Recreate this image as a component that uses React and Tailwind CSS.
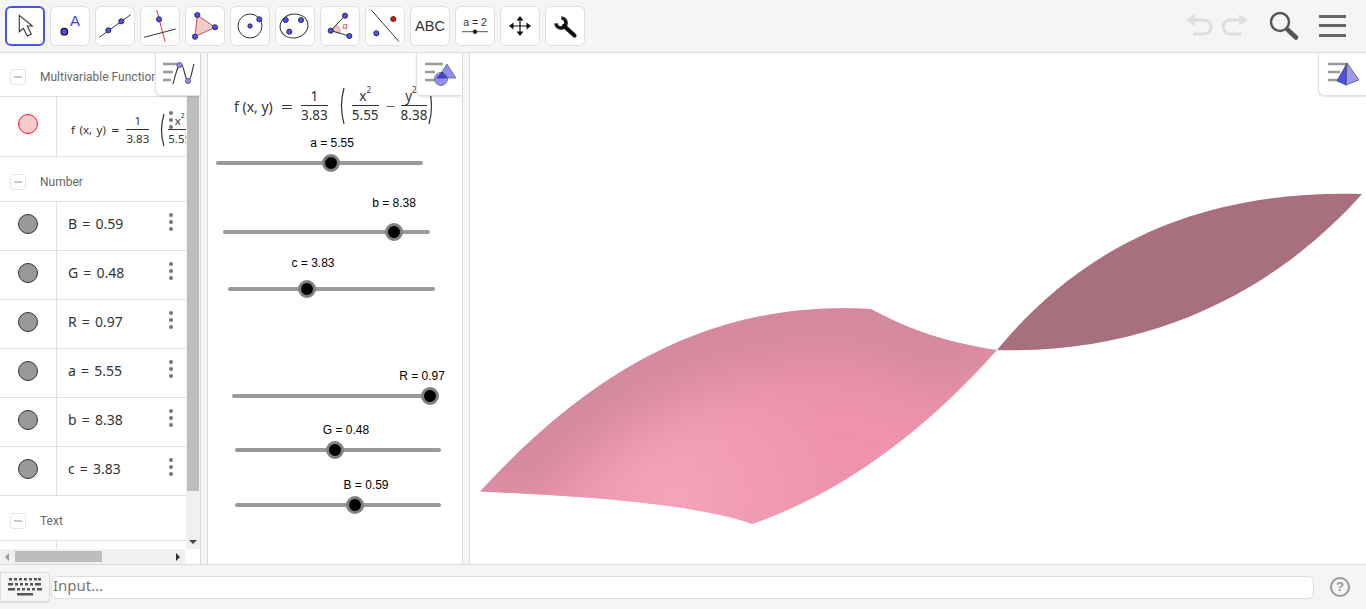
import React from "react";

const BLUE = "#4d4dff";

const Pt = ({ x, y, r = 2.6, fill = BLUE }) => (
  <circle cx={x} cy={y} r={r} fill={fill} stroke="#222" strokeWidth="0.8" />
);

/* -------------------- Toolbar icons -------------------- */

const toolIcons = [
  <path d="M14.3 9.3V25.7L18.3 22.3L22.3 30L26.3 28L22.3 20H27.3Z" fill="#fff" stroke="#333" strokeWidth="1.1" />,
  <>
    <circle cx="14.3" cy="25.7" r="3.3" fill={BLUE} stroke="#111" strokeWidth="1.2" />
    <text x="20" y="20" fontSize="15" fill="#4040f0" fontFamily="Liberation Sans, sans-serif">A</text>
  </>,
  <>
    <line x1="4.3" y1="31.3" x2="35.7" y2="8.7" stroke="#333" />
    <Pt x={13.3} y={24.3} />
    <Pt x={26.3} y={15.3} />
  </>,
  <>
    <line x1="16.7" y1="4" x2="25" y2="35.7" stroke="#e8323c" />
    <line x1="4" y1="31.3" x2="35.7" y2="23" stroke="#333" />
    <Pt x={19} y={13.3} />
  </>,
  <>
    <path d="M12.3 9L30 21.3L10 30.7Z" fill="#f6c8c8" stroke="#a85a5a" />
    <Pt x={12.3} y={9} />
    <Pt x={30} y={21.3} />
    <Pt x={10} y={30.7} />
  </>,
  <>
    <circle cx="20" cy="20" r="12" fill="none" stroke="#333" />
    <Pt x={20} y={20} r={2.2} />
    <Pt x={29.3} y={13.3} />
  </>,
  <>
    <ellipse cx="19" cy="20" rx="14" ry="12" fill="none" stroke="#333" transform="rotate(-12 19 20)" />
    <Pt x={10.7} y={14} />
    <Pt x={14.3} y={25.7} />
    <Pt x={26} y={14} />
  </>,
  <>
    <path d="M10.7 24.7L17 19A9 9 0 0 1 20 26.8Z" fill="#f6c0c0" stroke="#e08080" strokeWidth="0.7" />
    <path d="M25 9.7L10.7 24.7L29.3 30" fill="none" stroke="#333" />
    <Pt x={10.7} y={24.7} />
    <Pt x={25} y={9.7} />
    <Pt x={29.3} y={30} />
    <text x="22.5" y="23" fontSize="9" fill="#e8323c" fontFamily="Liberation Sans, sans-serif">α</text>
  </>,
  <>
    <line x1="6.3" y1="4" x2="34" y2="35.7" stroke="#333" />
    <Pt x={28.3} y={13} fill="#e01010" />
    <Pt x={11.3} y={27.3} />
  </>,
  <text x="20" y="25.2" fontSize="14.5" textAnchor="middle" fill="#333" fontFamily="Liberation Sans, sans-serif">ABC</text>,
  <>
    <text x="20" y="19.5" fontSize="10.5" textAnchor="middle" fill="#333" fontFamily="Liberation Sans, sans-serif">a = 2</text>
    <line x1="7" y1="25.7" x2="33" y2="25.7" stroke="#555" />
    <circle cx="20" cy="25.7" r="2.2" fill="#222" />
  </>,
  <>
    <path d="M20 12V28M12 20H28" stroke="#111" strokeWidth="1.2" />
    <path d="M20 10L23.5 14.5H16.5ZM20 30L23.5 25.5H16.5ZM9 20L13.5 16.5V23.5ZM31 20L26.5 16.5V23.5Z" fill="#111" />
  </>,
  <>
    <path d="M16.4 12A5 5 0 1 1 11 17.4" fill="none" stroke="#111" strokeWidth="3.6" />
    <line x1="19" y1="20" x2="29.5" y2="29.5" stroke="#111" strokeWidth="4.2" strokeLinecap="round" />
  </>,
];

const ToolButton = ({ children, active }) => (
  <div
    className={`w-10 h-10 shrink-0 bg-white rounded-md ${
      active ? "border-2 border-[#4455f0]" : "border border-[#e0e0e0]"
    } flex items-center justify-center`}
  >
    <svg width="40" height="40" viewBox="0 0 40 40" className="shrink-0">
      {children}
    </svg>
  </div>
);

const Toolbar = () => (
  <div className="h-[53px] shrink-0 bg-[#f5f5f5] border-b border-[#dcdcdc] flex items-center pl-[5px] pr-[20px] pb-[1px]">
    <div className="flex gap-[5px]">
      {toolIcons.map((icon, i) => (
        <ToolButton key={i} active={i === 0}>
          {icon}
        </ToolButton>
      ))}
    </div>
    <div className="ml-auto flex items-center gap-[19px]">
      <svg width="64" height="26" viewBox="0 0 64 26">
        <g fill="none" stroke="#dedede" strokeWidth="3">
          <path d="M8 7H19A7 7 0 0 1 19 21H8" />
          <path d="M56 7H45A7 7 0 0 0 45 21H56" />
        </g>
        <path d="M1 7L10 1V13ZM63 7L54 1V13Z" fill="#dedede" />
      </svg>
      <svg width="32" height="32" viewBox="0 0 32 32">
        <circle cx="12" cy="12" r="9" fill="none" stroke="#555" strokeWidth="2.4" />
        <line x1="20" y1="20" x2="28" y2="27.5" stroke="#555" strokeWidth="4.5" strokeLinecap="round" />
      </svg>
      <div className="w-[27px] flex flex-col gap-[6.5px]">
        <div className="h-[3px] bg-[#666]" />
        <div className="h-[3px] bg-[#666]" />
        <div className="h-[3px] bg-[#666]" />
      </div>
    </div>
  </div>
);

/* -------------------- Math bits -------------------- */

const Frac = ({ top, bottom, className = "" }) => (
  <span className={`inline-flex flex-col items-center leading-none ${className}`}>
    <span className="pb-[2px]">{top}</span>
    <span className="self-stretch h-px bg-[#333]" />
    <span className="pt-[3px]">{bottom}</span>
  </span>
);

const Sq = ({ v, className = "" }) => (
  <span className={className}>
    {v}
    <sup className="text-[60%] align-[45%] leading-none">2</sup>
  </span>
);

const Paren = ({ h, flip, className = "" }) => (
  <svg width="7" height={h} viewBox={`0 0 7 ${h}`} className={`shrink-0 ${flip ? "-scale-x-100" : ""} ${className}`}>
    <path d={`M6 1Q1 ${h / 2} 6 ${h - 1}`} fill="none" stroke="#333" strokeWidth="1.2" />
  </svg>
);

/* -------------------- Algebra view -------------------- */

const MinusBox = () => (
  <div className="w-4 h-4 rounded-[3px] border border-[#e6e6e6] bg-white flex items-center justify-center shrink-0">
    <div className="w-2 h-[2px] bg-[#c8c8c8]" />
  </div>
);

const GroupHeader = ({ title, h = "h-[44px]" }) => (
  <div className={`${h} shrink-0 flex items-center pl-[10px] pt-[5px] border-b border-[#e0e0e0] whitespace-nowrap`}>
    <MinusBox />
    <span className="ml-[14px] text-[12px] text-[#666] font-['Roboto',sans-serif]">{title}</span>
  </div>
);

const Dots = ({ className }) => (
  <div className={`absolute left-[169px] flex flex-col gap-[3px] ${className}`}>
    <div className="w-[4px] h-[4px] rounded-full bg-[#777]" />
    <div className="w-[4px] h-[4px] rounded-full bg-[#777]" />
    <div className="w-[4px] h-[4px] rounded-full bg-[#777]" />
  </div>
);

const AlgebraRow = ({ h = "h-[49px]", color = "bg-[#999]", ring = "border-[#333]", dots = "top-[11px]", textPad = "pb-[5px]", children }) => (
  <div className={`${h} shrink-0 relative flex border-b border-[#e0e0e0]`}>
    <div className="w-[57px] shrink-0 border-r border-[#e0e0e0] flex items-center justify-center pb-[5px]">
      <div className={`w-5 h-5 rounded-full border ${ring} ${color}`} />
    </div>
    <div className={`flex-1 min-w-0 overflow-hidden flex items-center pl-[11px] ${textPad} whitespace-nowrap text-[14px] text-[#333] [word-spacing:1.5px]`}>
      {children}
    </div>
    <Dots className={dots} />
  </div>
);

const numbers = ["B = 0.59", "G = 0.48", "R = 0.97", "a = 5.55", "b = 8.38", "c = 3.83"];

const AlgebraView = () => (
  <div className="w-[200px] shrink-0 relative flex flex-col bg-white font-['Noto_Sans',sans-serif]">
    <div className="flex-1 min-h-0 flex">
      <div className="w-[186px] shrink-0 flex flex-col overflow-hidden">
        <GroupHeader title="Multivariable Function" />
        <AlgebraRow h="h-[60px]" color="bg-[#f7c9cc]" ring="border-[#f01828]" dots="top-[14px]" textPad="pt-[6px]">
          <span className="pl-[3px] text-[11.5px] mr-[6px]">f (x, y)</span>
          <span className="text-[11.5px] inline-block scale-x-125 mr-[8px]">=</span>
          <Frac top="1" bottom="3.83" className="text-[11.5px] mr-[9px]" />
          <Paren h={34} className="mr-[3px]" />
          <Frac top={<Sq v="x" />} bottom="5.55" className="text-[11.5px] text-[#333] shrink-0" />
        </AlgebraRow>
        <GroupHeader title="Number" h="h-[45px]" />
        {numbers.map((n) => (
          <AlgebraRow key={n}>{n}</AlgebraRow>
        ))}
        <GroupHeader title="Text" h="h-[45px]" />
        <div className="flex-1 flex">
          <div className="w-[57px] border-r border-[#e0e0e0]" />
        </div>
      </div>
      <div className="w-[14px] shrink-0 bg-[#f0f0f0] flex flex-col items-center">
        <div className="w-[12px] h-[438px] bg-[#bdbdbd]" />
        <div className="mt-auto mb-[5px] w-0 h-0 border-x-[4px] border-x-transparent border-t-[4px] border-t-[#444]" />
      </div>
    </div>
    <div className="h-[15px] shrink-0 flex">
      <div className="w-[185px] bg-[#f0f0f0] flex items-center">
        <div className="ml-[5px] w-0 h-0 border-y-[4px] border-y-transparent border-r-[4px] border-r-[#999]" />
        <div className="ml-[6px] w-[87px] h-[11px] bg-[#bdbdbd]" />
        <div className="ml-auto mr-[5px] w-0 h-0 border-y-[4px] border-y-transparent border-l-[4px] border-l-[#333]" />
      </div>
    </div>
    <StyleTab className="left-[155px] w-[45px]">
      <svg width="34" height="26" viewBox="0 0 34 26">
        <path d="M2 3H16M2 11H12M2 19H10" stroke="#999" strokeWidth="2.4" />
        <path d="M12 23C15 12 17 3 20 3C23 3 24 20 27 20C30 20 31 9 33 3" fill="none" stroke="#333" strokeWidth="1.1" />
        <circle cx="18.5" cy="4" r="2.6" fill="#8f8ff5" stroke="#444" strokeWidth="0.7" />
        <circle cx="27" cy="20" r="2.6" fill="#8f8ff5" stroke="#444" strokeWidth="0.7" />
      </svg>
    </StyleTab>
  </div>
);

function StyleTab({ className, children }) {
  return (
    <div
      className={`absolute top-0 h-[43px] bg-white border-l border-b border-[#e2e2e2] rounded-bl-md shadow-[0_1px_2px_rgba(0,0,0,0.12)] flex items-center justify-center ${className}`}
    >
      {children}
    </div>
  );
}

const Divider = () => (
  <div className="w-[8px] shrink-0 bg-[#f5f5f5] border-x border-[#dcdcdc]" />
);

/* -------------------- Graphics view -------------------- */

const sliders = [
  { label: "a = 5.55", x1: 216, x2: 423, y: 163, thumb: 331, labelX: 332, labelY: 144 },
  { label: "b = 8.38", x1: 223, x2: 430, y: 232, thumb: 394, labelX: 394, labelY: 204 },
  { label: "c = 3.83", x1: 228, x2: 435, y: 289, thumb: 307, labelX: 313, labelY: 264 },
  { label: "R = 0.97", x1: 232, x2: 438, y: 396, thumb: 430, labelX: 422, labelY: 377 },
  { label: "G = 0.48", x1: 235, x2: 441, y: 450, thumb: 335, labelX: 346, labelY: 431 },
  { label: "B = 0.59", x1: 235, x2: 441, y: 505, thumb: 355, labelX: 366, labelY: 486 },
];

// positions come from the GeoGebra canvas, so page coords minus the panel origin
const Slider = ({ label, x1, x2, y, thumb, labelX, labelY }) => (
  <>
    <div
      className="absolute -translate-x-1/2 -translate-y-1/2 text-[12px] leading-none text-black whitespace-nowrap font-['Liberation_Sans',sans-serif]"
      style={{ left: labelX - 208, top: labelY - 54 }}
    >
      {label}
    </div>
    <div
      className="absolute h-[4px] -translate-y-1/2 rounded-full bg-[#999]"
      style={{ left: x1 - 208, width: x2 - x1, top: y - 53 }}
    />
    <div
      className="absolute w-[18px] h-[18px] -translate-x-1/2 -translate-y-1/2 rounded-full bg-black border-[3px] border-[#808080]"
      style={{ left: thumb - 208, top: y - 53 }}
    />
  </>
);

const GraphicsView = () => (
  <div className="w-[254px] shrink-0 relative bg-white overflow-hidden font-['Noto_Sans',sans-serif]">
    <div className="absolute left-[26px] top-[34px] flex items-center text-[13.5px] text-[#333] whitespace-nowrap">
      <span className="text-[14px] w-[40px]">f (x, y)</span>
      <span className="text-[14px] w-[12px] ml-[7px] text-center inline-block scale-x-150">=</span>
      <Frac top="1" bottom="3.83" className="ml-[8px]" />
      <Paren h={38} className="ml-[10px]" />
      <Frac top={<Sq v="x" />} bottom="5.55" className="ml-[7px]" />
      <span className="ml-[6px] w-[11px] text-center inline-block scale-x-125 text-[#555]">−</span>
      <Frac top={<Sq v="y" className="pr-[6px]" />} bottom="8.38" className="ml-[5px]" />
      <Paren h={38} flip className="ml-px" />
    </div>
    {sliders.map((s) => (
      <Slider key={s.label} {...s} />
    ))}
    <StyleTab className="right-0 w-[46px]">
      <svg width="34" height="26" viewBox="0 0 34 26">
        <path d="M2 3H20M2 11H12M2 19H12" stroke="#999" strokeWidth="2.4" />
        <path d="M24 3L33 17H15Z" fill="#8f8ff5" stroke="#666" strokeWidth="0.8" />
        <circle cx="18" cy="18" r="6.5" fill="#8f8ff5" stroke="#666" strokeWidth="0.8" />
        <path d="M19 11L24 17H14Z" fill="#4040e0" stroke="#333" strokeWidth="0.6" />
      </svg>
    </StyleTab>
  </div>
);

/* -------------------- 3D view -------------------- */

const topEdge = "M480 491.5C570 395 690 298 871 309C900 325 940 342 997 350";
const frontShape = `${topEdge}C930 425 850 490 752 524C700 505 600 497 480 491.5Z`;
const backShape = "M997 350C1055 280 1160 188 1362 194C1290 275 1170 355 997 350Z";

const View3D = () => (
  <div className="flex-1 min-w-0 relative bg-white">
    <svg className="absolute inset-0 w-full h-full" viewBox="470 53 896 511">
      <defs>
        <clipPath id="frontClip">
          <path d={frontShape} />
        </clipPath>
        <filter id="soft" x="-20%" y="-40%" width="140%" height="180%">
          <feGaussianBlur stdDeviation="32" />
        </filter>
        <radialGradient id="glow" gradientUnits="userSpaceOnUse" cx="670" cy="495" r="170">
          <stop offset="0" stopColor="#f4a4ba" />
          <stop offset="1" stopColor="#f4a4ba" stopOpacity="0" />
        </radialGradient>
      </defs>
      <path d={backShape} fill="#a8707f" />
      <path d={frontShape} fill="#ef93ac" />
      <g clipPath="url(#frontClip)">
        <rect x="470" y="300" width="540" height="240" fill="url(#glow)" />
        <path d={topEdge} fill="none" stroke="#cf879b" strokeWidth="90" filter="url(#soft)" />
      </g>
    </svg>
    <StyleTab className="right-0 w-[48px]">
      <svg width="34" height="26" viewBox="0 0 34 26">
        <path d="M2 3H20M2 11H14M2 19H14" stroke="#999" strokeWidth="2.4" />
        <path d="M21 2L11 20L20 24Z" fill="#4d4df0" stroke="#444" strokeWidth="0.7" />
        <path d="M21 2L33 19L20 24Z" fill="#9a9af5" stroke="#444" strokeWidth="0.7" />
      </svg>
    </StyleTab>
  </div>
);

/* -------------------- Input bar -------------------- */

const KeyRow = ({ keys, y }) =>
  keys.map(([x, w]) => <rect key={x} x={x} y={y} width={w} height="2.5" fill="#555" />);

const InputBar = () => (
  <div className="h-[45px] shrink-0 bg-[#f5f5f5] border-t border-[#dcdcdc] flex items-center">
    <div className="w-[50px] h-[30px] shrink-0 bg-[#f5f5f5] border border-[#dcdcdc] rounded-r-sm shadow-[0_1px_1px_rgba(0,0,0,0.1)] flex items-center justify-center">
      <svg width="34" height="20" viewBox="0 0 34 20">
        <KeyRow y={1} keys={[[1, 3], [6, 3], [11, 3], [16, 3], [21, 3], [26, 3], [30, 3]]} />
        <KeyRow y={6} keys={[[0, 5], [7, 3], [12, 3], [17, 3], [22, 3], [27, 6]]} />
        <KeyRow y={11} keys={[[0, 7], [9, 3], [14, 3], [19, 3], [24, 3], [29, 5]]} />
        <KeyRow y={16} keys={[[9, 16]]} />
      </svg>
    </div>
    <div className="ml-[1px] w-[1263px] h-[23px] bg-white border border-[#dcdcdc] rounded-md flex items-center pl-[1px] pb-[3px] text-[15px] text-[#777] font-['Noto_Sans',sans-serif]">
      Input…
    </div>
    <div className="ml-[16px] w-[20px] h-[20px] rounded-full border-2 border-[#999] flex items-center justify-center text-[13px] font-bold text-[#999] font-['Liberation_Sans',sans-serif]">
      ?
    </div>
  </div>
);

/* -------------------- Main -------------------- */

export default function App() {
  return (
    <div className="w-[1366px] h-[609px] flex flex-col overflow-hidden bg-white">
      <Toolbar />
      <div className="flex-1 min-h-0 flex">
        <AlgebraView />
        <Divider />
        <GraphicsView />
        <Divider />
        <View3D />
      </div>
      <InputBar />
    </div>
  );
}
